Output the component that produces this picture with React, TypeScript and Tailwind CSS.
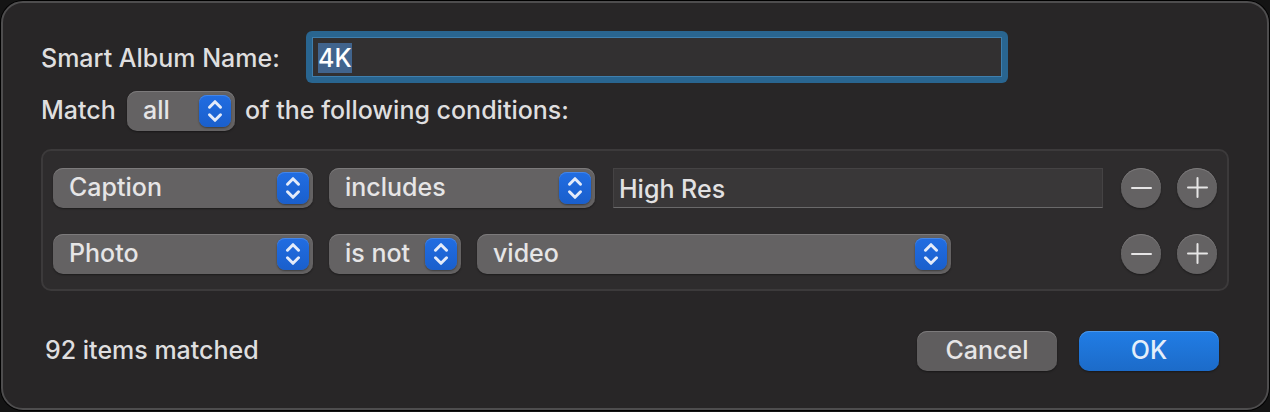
import { useEffect, useRef, useState } from "react";
import type { ReactNode } from "react";

function Popup({ label, value, options, className }: { label: string; value: string; options: string[]; className: string }) {
  const [current, setCurrent] = useState(value);
  return (
    <div className={`relative h-10 ${className}`}>
      <select
        aria-label={label}
        value={current}
        onChange={(e) => setCurrent(e.target.value)}
        className="block h-10 w-full appearance-none rounded-[10px] bg-[#646263] pr-9 pb-0.5 pl-4 text-[#e6e5e6] shadow-[inset_0_1px_0_#7c7a7b,0_1px_2px_rgba(0,0,0,0.4)] outline-none"
      >
        {options.map((option) => (
          <option key={option}>{option}</option>
        ))}
      </select>
      <span className="pointer-events-none absolute top-1 right-1 size-8 rounded-lg bg-linear-to-b from-[#216de2] to-[#1a5fcc] shadow-[inset_0_1px_0_#4586e8,0_1px_2px_rgba(0,0,0,0.4)]">
        <svg viewBox="0 0 32 32" className="size-8" fill="none" stroke="#e4ebf9" strokeWidth="3" strokeLinecap="round" strokeLinejoin="round" aria-hidden="true">
          <path d="M10.5 12.2 16 6.7l5.5 5.5M10.5 19.8l5.5 5.5 5.5-5.5" />
        </svg>
      </span>
    </div>
  );
}

function RoundButton({ label, d }: { label: string; d: string }) {
  return (
    <button
      type="button"
      aria-label={label}
      className="size-10 shrink-0 rounded-full bg-[#646263] shadow-[inset_0_1px_0_#7c7a7b,0_1px_2px_rgba(0,0,0,0.4)]"
    >
      <svg viewBox="0 0 40 40" className="size-10" fill="none" stroke="#e6e5e6" strokeWidth="2" strokeLinecap="round" aria-hidden="true">
        <path d={d} />
      </svg>
    </button>
  );
}

function Condition({ children }: { children: ReactNode }) {
  return (
    <div className="flex items-center gap-4">
      {children}
      <div className="ml-auto flex gap-4 pl-0.5">
        <RoundButton label="Remove condition" d="M11 20h19" />
        <RoundButton label="Add condition" d="M11 19.5h19M20.5 10v19" />
      </div>
    </div>
  );
}

export default function App() {
  const nameRef = useRef<HTMLInputElement>(null);

  useEffect(() => {
    nameRef.current?.focus();
    nameRef.current?.select();
  }, []);

  return (
    <main className="min-h-screen bg-[#141414] p-px font-['Inter',sans-serif] text-[25px] leading-8 font-medium text-[#dfdedf]">
      <form
        onSubmit={(e) => e.preventDefault()}
        className="rounded-[22px] border-2 border-[#4e4d4e] bg-[#282627] px-[38px] pt-7 pb-[37px] shadow-[0_0_0_1px_#000]"
      >
        <div className="flex items-center">
          <label htmlFor="album-name" className="w-[265px] shrink-0 pt-0.5">
            Smart Album Name:
          </label>
          <div className="max-w-[702px] flex-1 rounded-md bg-[#296590] p-1.5">
            <input
              id="album-name"
              ref={nameRef}
              defaultValue="4K"
              className="block h-10 w-full border border-[#3f7fae] bg-[#323031] px-[5px] pt-0.5 leading-8 text-white outline-none selection:bg-[#41648d] selection:text-white"
            />
          </div>
        </div>

        <div className="mt-2 flex items-center">
          <span className="w-[86px] shrink-0 pb-0.5">Match</span>
          <Popup label="Match" value="all" options={["all", "any"]} className="w-[108px]" />
          <span className="pb-0.5 pl-2.5">of the following conditions:</span>
        </div>

        <div className="mt-[18px] flex flex-col gap-[26px] rounded-[10px] border-2 border-[#3c3a3b] bg-[#2e2c2d] px-2.5 pt-[17px] pb-[15px]">
          <Condition>
            <Popup label="Field" value="Caption" options={["Caption", "Photo"]} className="w-[260px]" />
            <Popup label="Comparison" value="includes" options={["includes", "is"]} className="w-[266px]" />
            <input
              aria-label="Caption text"
              defaultValue="High Res"
              className="ml-0.5 h-10 min-w-0 flex-1 border border-[#454344] border-b-[#6a696a] bg-[#393738] px-[5px] pt-0.5 text-[#e2e1e2] outline-none"
            />
          </Condition>
          <Condition>
            <Popup label="Field" value="Photo" options={["Photo", "Caption"]} className="w-[260px]" />
            <Popup label="Comparison" value="is not" options={["is not", "is"]} className="w-[132px]" />
            <Popup label="Media type" value="video" options={["video", "portrait"]} className="w-[474px]" />
          </Condition>
        </div>

        <div className="mt-10 flex items-center gap-[22px] pr-2.5 pl-1">
          <output className="mr-auto pb-0.5">92 items matched</output>
          <button
            type="button"
            className="h-10 w-[140px] rounded-[10px] bg-[#5f5d5e] pb-0.5 text-[#e6e5e6] shadow-[inset_0_1px_0_#7c7a7b,0_1px_2px_rgba(0,0,0,0.4)]"
          >
            Cancel
          </button>
          <button
            type="submit"
            className="h-10 w-[140px] rounded-[10px] bg-linear-to-b from-[#217de5] to-[#1c6bc9] pb-0.5 text-[#e4eefa] shadow-[inset_0_1px_0_#4c97ea,0_1px_2px_rgba(0,0,0,0.4)]"
          >
            OK
          </button>
        </div>
      </form>
    </main>
  );
}
